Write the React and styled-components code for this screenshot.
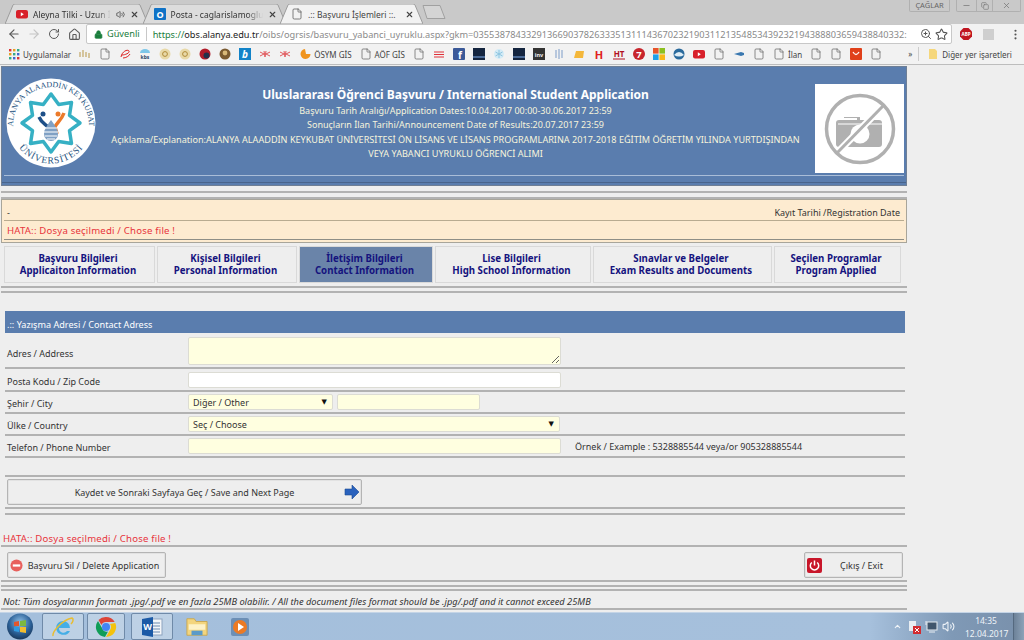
import React from "react";
import styled, { createGlobalStyle } from "styled-components";
import {
  ArrowLeft,
  ArrowRight,
  RotateCw,
  Home,
  Lock,
  ZoomIn,
  Star,
  File,
  MoreVertical,
  Volume2,
  X,
  Minus,
  Copy,
  ChevronUp,
} from "lucide-react";

const FONT = `"Noto Sans", "DejaVu Sans", sans-serif`;

const GlobalStyle = createGlobalStyle`
  html, body {
    margin: 0;
    padding: 0;
    background: #eeeeee;
  }
  * {
    box-sizing: border-box;
  }
`;

const Screen = styled.div`
  width: 1024px;
  height: 640px;
  display: flex;
  flex-direction: column;
  overflow: hidden;
  font-family: ${FONT};
  background: #eeeeee;
`;

/* browser chrome */
const TabStrip = styled.div`
  height: 24px;
  flex: none;
  background: #c9c9c9;
  display: flex;
  align-items: flex-end;
  padding-left: 5px;
  position: relative;
`;

const Tab = styled.div`
  position: relative;
  width: 143px;
  height: 20px;
  margin-right: -5.5px;
  padding: 0 9px 0 11px;
  display: flex;
  align-items: center;
  gap: 5px;
  font-size: 8.5px;
  color: ${(p) => (p.$active ? "#444" : "#333")};
  z-index: ${(p) => (p.$active ? 2 : 1)};
`;

const TabShape = styled.svg`
  position: absolute;
  inset: 0;
  width: 100%;
  height: 100%;
  z-index: -1;
`;

const TabTitle = styled.span`
  flex: 1;
  white-space: nowrap;
  overflow: hidden;
  mask-image: ${(p) => (p.$fade ? "linear-gradient(90deg, #000 82%, transparent)" : "none")};
`;

const NewTab = styled.svg`
  width: 24px;
  height: 14px;
  margin: 0 0 5px 4px;
`;

const WindowControls = styled.div`
  margin-left: auto;
  align-self: flex-start;
  display: flex;
  gap: 6px;
  padding-right: 3px;
`;

const UserBadge = styled.div`
  width: 41px;
  height: 12px;
  border: 1px solid #b0b0b0;
  border-top: 0;
  border-radius: 0 0 2px 2px;
  font-size: 7.5px;
  line-height: 11px;
  text-align: center;
  color: #666;
`;

const WinButtons = styled.div`
  width: 65px;
  height: 12px;
  border: 1px solid #b0b0b0;
  border-top: 0;
  border-radius: 0 0 2px 2px;
  display: grid;
  grid-template-columns: 20px 16px 1fr;
  color: #777;
`;

const WinButton = styled.div`
  display: flex;
  align-items: center;
  justify-content: center;
  border-right: ${(p) => (p.$last ? "0" : "1px solid #b0b0b0")};
`;

const Toolbar = styled.div`
  height: 20px;
  flex: none;
  background: #f2f2f2;
  display: flex;
  align-items: center;
  color: #555;
`;

const NavButton = styled.div`
  width: 20px;
  height: 20px;
  flex: none;
  display: flex;
  align-items: center;
  justify-content: center;
  color: ${(p) => (p.$off ? "#c4c4c4" : "#5a5a5a")};
`;

const NavGroup = styled.div`
  display: flex;
  padding-left: 4px;
  width: 86px;
  flex: none;
`;

const Omnibox = styled.div`
  width: 866px;
  height: 20px;
  flex: none;
  background: #fff;
  border: 1px solid #c8c8c8;
  border-radius: 2px;
  display: flex;
  align-items: center;
  padding: 0 3px 0 7px;
  font-size: 9.2px;
  color: #1a7d3c;
`;

const Secure = styled.span`
  margin-left: 4px;
  padding-right: 6px;
  border-right: 1px solid #c8c8c8;
  line-height: 14px;
`;

const Url = styled.div`
  flex: 1;
  min-width: 0;
  margin: 0 6px 0 6px;
  white-space: nowrap;
  overflow: hidden;
  color: #8a8a8a;
`;

const UrlScheme = styled.span`
  color: #1a7d3c;
`;

const UrlHost = styled.span`
  color: #222;
`;

const OmniIcons = styled.div`
  display: flex;
  gap: 3px;
  color: #555;
`;

const Extensions = styled.div`
  flex: 1;
  display: flex;
  align-items: center;
  padding-left: 8px;
  gap: 11px;
`;

const GrayExt = styled.div`
  width: 11px;
  height: 11px;
  flex: none;
  background: #cfcfcf;
`;

const MenuDots = styled.div`
  margin-left: 4px;
  display: flex;
`;

const Bookmarks = styled.div`
  height: 21px;
  flex: none;
  background: #f2f2f2;
  border-bottom: 1px solid #bdbdbd;
  display: flex;
  align-items: center;
  padding-left: 8px;
  gap: 8px;
  font-size: 8px;
  color: #444;
  white-space: nowrap;
`;

const Mark = styled.div`
  display: flex;
  align-items: center;
  gap: 3px;
`;

const More = styled.span`
  margin-left: 18px;
  padding-right: 6px;
  border-right: 1px solid #ccc;
  line-height: 14px;
`;

const Favicon = styled.svg`
  width: 12px;
  height: 12px;
  flex: none;
  display: block;
`;

const PageIcon = () => <File size={12} color="#666" strokeWidth={1.5} />;

const favicons = {
  apps: (
    <>
      {[1, 5, 9].map((y, i) =>
        [1, 5, 9].map((x, j) => (
          <rect
            key={`${i}${j}`}
            x={x}
            y={y}
            width="2.4"
            height="2.4"
            fill={["#d33", "#e8a020", "#3a8", "#46c"][(i + j) % 4]}
          />
        ))
      )}
    </>
  ),
  hecs: <path d="M1 4v5M4 2v7M7 4v5M10 5v5" stroke="#c9b27a" strokeWidth="1.4" />,
  ered: <path d="M2 9C3 3 9 1 10 3S6 7 3 7M4 10c3 0 6-2 7-4" stroke="#d22" fill="none" />,
  kbs: (
    <>
      <path d="M1 5a5 4 0 0 1 10 0z" fill="#7cc6e8" />
      <text x="6" y="10.5" fontSize="5" fontWeight="700" fill="#246" textAnchor="middle">kbs</text>
    </>
  ),
  seal: (
    <>
      <circle cx="6" cy="6" r="5.5" fill="#e8d9a8" />
      <circle cx="6" cy="6" r="2.4" fill="none" stroke="#b08a35" />
    </>
  ),
  ball: (
    <>
      <circle cx="6" cy="6" r="5.5" fill="#b01c2a" />
      <circle cx="7.5" cy="7.5" r="3" fill="#23304a" />
    </>
  ),
  brown: (
    <>
      <circle cx="6" cy="6" r="5.5" fill="#7a5a30" />
      <circle cx="6" cy="5" r="2.4" fill="#d8b878" />
    </>
  ),
  b: (
    <>
      <rect width="12" height="12" fill="#1283c8" />
      <text x="6" y="10" fontSize="10" fontWeight="700" fontStyle="italic" fill="#fff" textAnchor="middle">b</text>
    </>
  ),
  osym: <path d="M1 4l4 2-4 2M11 4L7 6l4 2M5 3l1 6 1-6" stroke="#e2585c" fill="none" />,
  orange: <path d="M6 1a5 5 0 1 0 5.5 5H7L6 1z" fill="#f0941e" />,
  stripes: <path d="M1 4h10M1 6.5h10M1 9h10" stroke="#e03038" strokeWidth="1.2" />,
  f: (
    <>
      <rect width="12" height="12" rx="1" fill="#3b5998" />
      <text x="7" y="10.5" fontSize="10" fontWeight="700" fill="#fff" textAnchor="middle">f</text>
    </>
  ),
  dark: (
    <>
      <rect width="12" height="12" fill="#14253f" />
      <rect y="8" width="12" height="2" fill="#4a6a96" />
    </>
  ),
  snow: (
    <>
      <circle cx="6" cy="6" r="5" fill="#d4ebf6" />
      <path d="M6 2v8M2.5 4l7 4M9.5 4l-7 4" stroke="#8cc4e0" />
    </>
  ),
  inv: (
    <>
      <rect width="12" height="12" fill="#333" />
      <text x="6" y="8.5" fontSize="5.5" fontWeight="700" fill="#eee" textAnchor="middle">inv</text>
    </>
  ),
  pale: <path d="M3 2v8M6 1v10M9 2v8" stroke="#a8bcd8" strokeWidth="1.6" />,
  folderOrange: <path d="M1 10l2-7h8l-1 7z" fill="#f4b73a" />,
  h: <text x="6" y="10.5" fontSize="11" fontWeight="700" fill="#e02020" textAnchor="middle">H</text>,
  ht: (
    <>
      <text x="6" y="9" fontSize="8" fontWeight="700" fill="#b01020" textAnchor="middle">HT</text>
      <path d="M0 11h12" stroke="#b01020" />
    </>
  ),
  seven: (
    <>
      <circle cx="6" cy="6" r="6" fill="#c8252c" />
      <text x="6" y="9.5" fontSize="9.5" fontWeight="700" fill="#fff" textAnchor="middle">7</text>
    </>
  ),
  grid: (
    <>
      <rect width="5.6" height="5.6" fill="#e8542a" />
      <rect x="6.4" width="5.6" height="5.6" fill="#8cc020" />
      <rect y="6.4" width="5.6" height="5.6" fill="#1ea0e8" />
      <rect x="6.4" y="6.4" width="5.6" height="5.6" fill="#f8b818" />
    </>
  ),
  globe: (
    <>
      <circle cx="6" cy="6" r="5.5" fill="#2a6a9c" />
      <path d="M1 7q5-6 10 0q-5 3-10 0z" fill="#e0eef6" />
    </>
  ),
  yt: (
    <>
      <rect y="2" width="12" height="8.5" rx="2" fill="#d8202a" />
      <path d="M4.8 4.2l3 2-3 2z" fill="#fff" />
    </>
  ),
  fish: <path d="M1 6l7-2 3 1v2l-3 1z" fill="#3a78b0" />,
  basket: (
    <>
      <rect width="12" height="12" rx="1" fill="#e0401a" />
      <path d="M3 4q3 5 6 0" stroke="#fff" fill="none" strokeWidth="1.3" />
    </>
  ),
};

const bookmarkItems = [
  { icon: "apps", label: "Uygulamalar" },
  { icon: "hecs" },
  { icon: "page" },
  { icon: "ered" },
  { icon: "kbs" },
  { icon: "seal" },
  { icon: "seal" },
  { icon: "ball" },
  { icon: "brown" },
  { icon: "b" },
  { icon: "osym" },
  { icon: "osym" },
  { icon: "orange", label: "ÖSYM GİS" },
  { icon: "page", label: "AÖF GİS" },
  { icon: "page" },
  { icon: "stripes" },
  { icon: "f" },
  { icon: "dark" },
  { icon: "snow" },
  { icon: "dark" },
  { icon: "inv" },
  { icon: "pale" },
  { icon: "folderOrange" },
  { icon: "h" },
  { icon: "ht" },
  { icon: "seven" },
  { icon: "grid" },
  { icon: "globe" },
  { icon: "yt" },
  { icon: "page" },
  { icon: "fish" },
  { icon: "page" },
  { icon: "page", label: "İlan" },
  { icon: "page" },
  { icon: "page" },
  { icon: "basket" },
  { icon: "page" },
];

const tabShape = (fill, stroke) => (
  <TabShape viewBox="0 0 143 20" preserveAspectRatio="none">
    <path d="M0 20 L8 1 Q8.5 0 10 0 H133 Q134.5 0 135 1 L143 20 Z" fill={fill} stroke={stroke} />
  </TabShape>
);

/* page header */
const Main = styled.main`
  flex: 1;
  min-height: 0;
  width: 907px;
  padding-top: 1px;
  font-size: 9px;
  color: #333;
`;

const Header = styled.header`
  height: 120px;
  margin-left: 1px;
  background: #5a7dae;
  border: 1px solid #6f7f95;
  display: flex;
  flex-direction: column;
`;

const HeaderBody = styled.div`
  flex: 1;
  display: flex;
  align-items: flex-start;
  padding: 10px 2px 0 4px;
`;

const HeaderText = styled.div`
  flex: 1;
  padding-top: 10px;
  text-align: center;
  color: #f6f4dc;
  font-size: 9px;
  line-height: 14.4px;
`;

const HeaderTitle = styled.div`
  color: #fff;
  font-size: 12px;
  font-weight: 700;
  line-height: 16px;
  margin-bottom: 1px;
`;

const Explanation = styled.div`
  font-size: 9.1px;
`;

const Photo = styled.div`
  width: 89px;
  height: 89px;
  margin-top: 7px;
  background: #fff;
  display: flex;
  align-items: center;
  justify-content: center;
`;

const HeaderLine = styled.div`
  height: 1px;
  margin: 0 2px 6px;
  background: #a9bdd8;
`;

const HeaderFoot = styled.div`
  height: 1px;
  margin-bottom: 2px;
  background: #48648c;
`;

const Rule = styled.div`
  height: 2px;
  margin-top: ${(p) => p.$top || 0}px;
  margin-left: ${(p) => (p.$inset ? 5 : 1)}px;
  margin-right: ${(p) => (p.$inset ? 2 : 0)}px;
  background: #b2b2b2;
`;

/* notice */
const Notice = styled.div`
  height: 44px;
  margin-left: 1px;
  background: #fdebd0;
  border: 1px solid #a8a59a;
  padding: 0 2px;
`;

const NoticeTop = styled.div`
  height: 21px;
  display: flex;
  justify-content: space-between;
  align-items: flex-end;
  padding: 0 4px 1px 3px;
  border-bottom: 1px solid #b8ab90;
`;

const NoticeBottom = styled.div`
  height: 19px;
  display: flex;
  align-items: center;
  padding: 1px 0 0 3px;
  border-bottom: 1px solid #8e8e86;
`;

const ErrorText = styled.span`
  color: #e8343c;
  font-size: 9.6px;
  letter-spacing: 0.19px;
`;

/* tabs */
const TabBar = styled.nav`
  height: 37px;
  margin: 3px 0 0 4px;
  display: flex;
  gap: 2px;
`;

const StepTab = styled.div`
  width: ${(p) => p.$w}px;
  flex: none;
  display: flex;
  flex-direction: column;
  justify-content: center;
  align-items: center;
  padding-right: 3px;
  background: ${(p) => (p.$active ? "#6a84a9" : "#eeeeee")};
  border: 1px solid #d9d9d9;
  color: #15137e;
  font-size: 9.7px;
  font-weight: 700;
  line-height: 12px;
  white-space: nowrap;
`;

/* form */
const SectionBar = styled.div`
  height: 22px;
  margin: 18px 0 0 5px;
  width: 900px;
  background: #5a7dae;
  color: #fff;
  font-size: 9.1px;
  line-height: 27px;
  padding-left: 2px;
`;

const Form = styled.form`
  margin-left: 5px;
  width: 900px;
`;

const Row = styled.div`
  display: flex;
  align-items: center;
  height: ${(p) => p.$h}px;
  padding-top: ${(p) => p.$pt || 0}px;
  border-bottom: 2px solid #b2b2b2;
`;

const Label = styled.label`
  width: 183px;
  flex: none;
  padding: ${(p) => p.$pad ?? 3}px 0 0 2px;
`;

const fieldStyle = `
  height: 16px;
  border: 1px solid #dcdcd4;
  border-radius: 2px;
  padding: 0 4px;
  font-family: ${FONT};
  font-size: 9px;
  color: #333;
  outline: none;
  display: block;
`;

const TextField = styled.input`
  ${fieldStyle}
  width: ${(p) => p.$w}px;
  margin-left: ${(p) => p.$ml || 0}px;
  background: ${(p) => (p.$plain ? "#fff" : "#ffffe0")};
`;

const TextArea = styled.textarea`
  ${fieldStyle}
  width: 373px;
  height: 28px;
  margin: 0;
  background: #ffffe0;
`;

const SelectWrap = styled.div`
  position: relative;
  width: ${(p) => p.$w}px;
`;

const Select = styled.select`
  ${fieldStyle}
  appearance: none;
  width: 100%;
  background: #ffffe0;
`;

const SelectArrow = styled.span`
  position: absolute;
  top: 3px;
  right: 6px;
  font-size: 7px;
  line-height: 10px;
  color: #111;
  pointer-events: none;
`;

const Hint = styled.span`
  margin-left: 14px;
  white-space: nowrap;
`;

const ButtonRow = styled.div`
  display: flex;
  justify-content: space-between;
  margin-left: 7px;
  width: 896px;
  margin-top: ${(p) => p.$top || 0}px;
`;

const Button = styled.button`
  width: ${(p) => p.$w}px;
  height: 26px;
  padding: 0 1px 0 2px;
  background: #eeeeee;
  border: 1px solid #b4b4b4;
  border-radius: 2px;
  box-shadow: 0 0 0 1px #e2e2e2 inset;
  font-family: ${FONT};
  font-size: 9px;
  color: #333;
  display: flex;
  align-items: center;
`;

const ButtonCaption = styled.span`
  flex: 1;
  padding-left: ${(p) => p.$shift || 0}px;
  text-align: center;
  white-space: nowrap;
`;

const ErrorLine = styled.div`
  height: 30px;
  margin-left: 3px;
  display: flex;
  align-items: flex-end;
`;

const Note = styled.div`
  height: 17px;
  margin-left: 3px;
  display: flex;
  align-items: center;
  padding-top: 4px;
  font-size: 9.3px;
  font-style: italic;
  white-space: nowrap;
`;

/* windows taskbar */
const Taskbar = styled.footer`
  height: 28px;
  flex: none;
  background: linear-gradient(90deg, #a4bfdc 0%, #a6c0dc 85%, #7f99b6 93%, #7990ab 100%);
  border-top: 1px solid #c4d4e6;
  display: flex;
  align-items: stretch;
  padding-left: 5px;
`;

const StartOrb = styled.svg`
  width: 28px;
  height: 27px;
  margin-right: 9px;
`;

const TaskButton = styled.div`
  width: ${(p) => p.$w || 42}px;
  margin-right: ${(p) => p.$gap ?? 3}px;
  display: flex;
  align-items: center;
  justify-content: center;
  background: ${(p) => (p.$open ? "rgba(255, 255, 255, 0.28)" : "transparent")};
  border: ${(p) => (p.$open ? "1px solid #6f8aa8" : "0")};
  border-radius: 2px;
`;

const Tray = styled.div`
  margin-left: auto;
  display: flex;
  align-items: stretch;
  color: #eef3f8;
`;

const TrayIcon = styled.div`
  width: 17px;
  display: flex;
  align-items: center;
  justify-content: center;
`;

const Clock = styled.div`
  width: 42px;
  margin-left: 8px;
  display: flex;
  flex-direction: column;
  justify-content: center;
  font-size: 8.5px;
  line-height: 13px;
  text-align: center;
`;

const ShowDesktop = styled.div`
  width: 11px;
  margin-left: 6px;
  background: linear-gradient(90deg, #6d8299, #8da2b8);
  border-left: 1px solid #55697f;
`;

const starPoints = Array.from({ length: 16 }, (_, i) => {
  const r = i % 2 === 0 ? 29 : 20;
  const a = (Math.PI * i) / 8 - Math.PI / 2;
  return `${(45 + r * Math.cos(a)).toFixed(1)},${(46 + r * Math.sin(a)).toFixed(1)}`;
}).join(" ");

const UniversityLogo = () => (
  <svg width="90" height="92" viewBox="0 0 90 92">
    <defs>
      <path id="logoTop" d="M10 63a38 38 0 1 1 70 0" />
      <path id="logoBottom" d="M7 60a40.5 40.5 0 0 0 76 0" />
    </defs>
    <circle cx="45" cy="46" r="44.5" fill="#fff" />
    <text fontSize="8" fontFamily="Liberation Serif, serif" fill="#23517e">
      <textPath href="#logoTop" startOffset="50%" textAnchor="middle">
        ALANYA ALAADDİN KEYKUBAT
      </textPath>
    </text>
    <text fontSize="9.5" fontFamily="Liberation Serif, serif" fill="#23517e" letterSpacing="0.8">
      <textPath href="#logoBottom" startOffset="50%" textAnchor="middle">
        ÜNİVERSİTESİ
      </textPath>
    </text>
    <polygon points={starPoints} fill="#fff" stroke="#36b0c4" strokeWidth="3.5" strokeLinejoin="round" />
    <path d="M33 40c3 7 7 7 10 11" stroke="#1d4f88" strokeWidth="3.5" fill="none" />
    <circle cx="37" cy="37" r="2.5" fill="#1d4f88" />
    <path d="M58 36c-3 8-7 9-9 14l2 7" stroke="#ec7a2a" strokeWidth="3.5" fill="none" />
    <circle cx="52" cy="37" r="2.5" fill="#ec7a2a" />
    <path d="M45 43c-6 8-7 11-7 14a7 7 0 0 0 14 0c0-3-1-6-7-14z" fill="#7fa0c4" />
    <path d="M39 51h12M38 55h14M39 59h12M41 62h8" stroke="#fff" strokeWidth="1.1" />
  </svg>
);

const NoPhoto = () => (
  <svg width="72" height="72" viewBox="0 0 72 72">
    <path
      d="M15 27h5v-3h16v3h19q3 0 3 3v21q0 3-3 3H15q-3 0-3-3V30q0-3 3-3z"
      fill="#b0b0b0"
    />
    <rect x="19" y="25" width="14" height="2" fill="#fff" />
    <path d="M14 31h44" stroke="#fff" strokeWidth="1" />
    <circle cx="36" cy="41" r="9.5" fill="#fff" />
    <path d="M16 57L58 14" stroke="#fff" strokeWidth="7" />
    <circle cx="36" cy="36" r="33.5" fill="none" stroke="#b0b0b0" strokeWidth="3.5" />
    <path d="M13 60L59 13" stroke="#b0b0b0" strokeWidth="3" />
  </svg>
);

const NextArrow = () => (
  <svg width="16" height="16" viewBox="0 0 16 16">
    <path d="M1 5h7V1l7 7-7 7v-4H1z" fill="#2a62bd" stroke="#1a4a96" strokeWidth="0.6" />
  </svg>
);

const DeleteIcon = () => (
  <svg width="13" height="13" viewBox="0 0 14 14">
    <circle cx="7" cy="7" r="6.5" fill="#e8605c" />
    <rect x="3" y="5.8" width="8" height="2.4" fill="#fff" />
  </svg>
);

const ExitIcon = () => (
  <svg width="15" height="15" viewBox="0 0 15 15">
    <rect width="15" height="15" rx="2" fill="#c8162a" />
    <path d="M4.8 4.5a4.2 4.2 0 1 0 5.4 0" stroke="#fff" strokeWidth="1.5" fill="none" />
    <path d="M7.5 2.5v5" stroke="#fff" strokeWidth="1.5" />
  </svg>
);

const AdBlockIcon = () => (
  <svg width="12" height="12" viewBox="0 0 12 12">
    <path d="M3.5 0h5L12 3.5v5L8.500 12h-5L0 8.500v-5z" fill="#c01520" />
    <text x="6" y="7.8" fontSize="4.6" fontWeight="700" fill="#fff" textAnchor="middle">ABP</text>
  </svg>
);

const App = () => {
  return (
    <Screen>
      <GlobalStyle />
      <TabStrip>
        <Tab>
          {tabShape("#dcdcdc", "#9c9c9c")}
          <Favicon viewBox="0 0 12 12">{favicons.yt}</Favicon>
          <TabTitle $fade>Aleyna Tilki - Uzun İnce</TabTitle>
          <Volume2 size={9} color="#444" />
          <X size={9} color="#444" strokeWidth={3} />
        </Tab>
        <Tab>
          {tabShape("#dcdcdc", "#9c9c9c")}
          <Favicon viewBox="0 0 12 12">
            <rect width="12" height="12" rx="1" fill="#0f72c6" />
            <text x="6" y="9.5" fontSize="9" fontWeight="700" fill="#fff" textAnchor="middle">O</text>
          </Favicon>
          <TabTitle $fade>Posta - caglarislamoglu_</TabTitle>
          <X size={9} color="#444" strokeWidth={3} />
        </Tab>
        <Tab $active>
          {tabShape("#f2f2f2", "#9c9c9c")}
          <File size={12} color="#555" strokeWidth={1.5} />
          <TabTitle>.:: Başvuru İşlemleri ::.</TabTitle>
          <X size={9} color="#444" strokeWidth={3} />
        </Tab>
        <NewTab viewBox="0 0 24 14">
          <path d="M1 .5h17l5 13H5z" fill="#d4d4d4" stroke="#a0a0a0" />
        </NewTab>
        <WindowControls>
          <UserBadge>ÇAĞLAR</UserBadge>
          <WinButtons>
            <WinButton><Minus size={9} /></WinButton>
            <WinButton><Copy size={8} /></WinButton>
            <WinButton $last><X size={9} /></WinButton>
          </WinButtons>
        </WindowControls>
      </TabStrip>

      <Toolbar>
        <NavGroup>
          <NavButton><ArrowLeft size={14} /></NavButton>
          <NavButton $off><ArrowRight size={14} /></NavButton>
          <NavButton><RotateCw size={12} /></NavButton>
          <NavButton><Home size={13} /></NavButton>
        </NavGroup>
        <Omnibox>
          <Lock size={9} color="#1a7d3c" fill="#1a7d3c" />
          <Secure>Güvenli</Secure>
          <Url>
            <UrlScheme>https://</UrlScheme>
            <UrlHost>obs.alanya.edu.tr</UrlHost>
            /oibs/ogrsis/basvuru_yabanci_uyruklu.aspx?gkm=0355387843329136690378263335131114367023219031121354853439232194388803659438840332:
          </Url>
          <OmniIcons>
            <ZoomIn size={12} />
            <Star size={13} />
          </OmniIcons>
        </Omnibox>
        <Extensions>
          <AdBlockIcon />
          <GrayExt />
          <MenuDots><MoreVertical size={13} /></MenuDots>
        </Extensions>
      </Toolbar>

      <Bookmarks>
        {bookmarkItems.map((item, i) => (
          <Mark key={i}>
            {item.icon === "page" ? (
              <PageIcon />
            ) : (
              <Favicon viewBox="0 0 12 12">{favicons[item.icon]}</Favicon>
            )}
            {item.label && <span>{item.label}</span>}
          </Mark>
        ))}
        <More>»</More>
        <Mark>
          <Favicon viewBox="0 0 12 12">
            <path d="M2 1h6l2 2v8H2z" fill="#f5d77c" />
          </Favicon>
          <span>Diğer yer işaretleri</span>
        </Mark>
      </Bookmarks>

      <Main>
        <Header>
          <HeaderBody>
            <UniversityLogo />
            <HeaderText>
              <HeaderTitle>Uluslararası Öğrenci Başvuru / International Student Application</HeaderTitle>
              <div>Başvuru Tarih Aralığı/Application Dates:10.04.2017 00:00-30.06.2017 23:59</div>
              <div>Sonuçların İlan Tarihi/Announcement Date of Results:20.07.2017 23:59</div>
              <Explanation>
                Açıklama/Explanation:ALANYA ALAADDİN KEYKUBAT ÜNİVERSİTESİ ÖN LİSANS VE LİSANS PROGRAMLARINA 2017-2018 EĞİTİM ÖĞRETİM YILINDA YURTDIŞINDAN
                <br />
                VEYA YABANCI UYRUKLU ÖĞRENCİ ALIMI
              </Explanation>
            </HeaderText>
            <Photo>
              <NoPhoto />
            </Photo>
          </HeaderBody>
          <HeaderLine />
          <HeaderFoot />
        </Header>

        <Rule $top={5} />
        <Rule $top={4} />

        <Notice>
          <NoticeTop>
            <span>-</span>
            <span>Kayıt Tarihi /Registration Date</span>
          </NoticeTop>
          <NoticeBottom>
            <ErrorText>HATA:: Dosya seçilmedi / Chose file !</ErrorText>
          </NoticeBottom>
        </Notice>

        <TabBar>
          <StepTab $w={151}><span>Başvuru Bilgileri</span><span>Applicaiton Information</span></StepTab>
          <StepTab $w={140}><span>Kişisel Bilgileri</span><span>Personal Information</span></StepTab>
          <StepTab $w={134} $active><span>İletişim Bilgileri</span><span>Contact Information</span></StepTab>
          <StepTab $w={156}><span>Lise Bilgileri</span><span>High School Information</span></StepTab>
          <StepTab $w={179}><span>Sınavlar ve Belgeler</span><span>Exam Results and Documents</span></StepTab>
          <StepTab $w={127}><span>Seçilen Programlar</span><span>Program Applied</span></StepTab>
        </TabBar>

        <Rule $top={3} />
        <Rule $top={3} />

        <SectionBar>.:: Yazışma Adresi / Contact Adress</SectionBar>

        <Form>
          <Row $h={36} $pt={1}>
            <Label $pad={5}>Adres / Address</Label>
            <TextArea />
          </Row>
          <Row $h={23} $pt={1}>
            <Label>Posta Kodu / Zip Code</Label>
            <TextField $w={373} $plain />
          </Row>
          <Row $h={22}>
            <Label>Şehir / City</Label>
            <SelectWrap $w={145}>
              <Select defaultValue="other">
                <option value="other">Diğer / Other</option>
              </Select>
              <SelectArrow>▼</SelectArrow>
            </SelectWrap>
            <TextField $w={143} $ml={4} />
          </Row>
          <Row $h={22}>
            <Label>Ülke / Country</Label>
            <SelectWrap $w={372}>
              <Select defaultValue="choose">
                <option value="choose">Seç / Choose</option>
              </Select>
              <SelectArrow>▼</SelectArrow>
            </SelectWrap>
          </Row>
          <Row $h={22}>
            <Label>Telefon / Phone Number</Label>
            <TextField $w={373} />
            <Hint>Örnek / Example : 5328885544 veya/or 905328885544</Hint>
          </Row>
          <Row $h={19} />
        </Form>

        <ButtonRow $top={2}>
          <Button type="button" $w={355}>
            <ButtonCaption $shift={15}>Kaydet ve Sonraki Sayfaya Geç / Save and Next Page</ButtonCaption>
            <NextArrow />
          </Button>
        </ButtonRow>
        <Rule $top={2} $inset />
        <Rule $top={4} $inset />

        <ErrorLine>
          <ErrorText>HATA:: Dosya seçilmedi / Chose file !</ErrorText>
        </ErrorLine>
        <Rule />

        <ButtonRow $top={5}>
          <Button type="button" $w={159}>
            <DeleteIcon />
            <ButtonCaption>Başvuru Sil / Delete Application</ButtonCaption>
          </Button>
          <Button type="button" $w={99}>
            <ExitIcon />
            <ButtonCaption>Çıkış / Exit</ButtonCaption>
          </Button>
        </ButtonRow>
        <Rule $top={2} />
        <Rule $top={3} />
        <Rule $top={2} />
        <Note>
          Not: Tüm dosyalarının formatı .jpg/.pdf ve en fazla 25MB olabilir. / All the document files format should be .jpg/.pdf and it cannot exceed 25MB
        </Note>
        <Rule />
      </Main>

      <Taskbar>
        <StartOrb viewBox="0 0 28 27">
          <defs>
            <radialGradient id="orb" cx="50%" cy="35%" r="70%">
              <stop offset="0%" stopColor="#8fc0e8" />
              <stop offset="60%" stopColor="#2a5f96" />
              <stop offset="100%" stopColor="#16304f" />
            </radialGradient>
          </defs>
          <circle cx="15" cy="13.5" r="13" fill="url(#orb)" />
          <path d="M9 9l5-1v5H9z" fill="#e2562c" />
          <path d="M15 8l6-1v6h-6z" fill="#7db840" />
          <path d="M9 14h5v5l-5-1z" fill="#2f9ae0" />
          <path d="M15 14h6v6l-6-1z" fill="#f3bd2e" />
        </StartOrb>
        <TaskButton $open>
          <svg width="24" height="24" viewBox="0 0 24 24">
            <path d="M5 13a7 7 0 0 1 14 0H8a4.5 4.5 0 0 0 8 3h3a7.5 7.5 0 0 1-14-3z" fill="#45aee6" />
            <path d="M2 21C1 17 11 5 21 3c2 1 1 4-1 6" stroke="#e8bd32" strokeWidth="1.5" fill="none" />
          </svg>
        </TaskButton>
        <TaskButton $open $w={38} $gap={6}>
          <svg width="22" height="22" viewBox="0 0 22 22">
            <path d="M11 1a10 10 0 0 1 8.7 5H11a5 5 0 0 0-4.6 3L3.5 4A10 10 0 0 1 11 1z" fill="#dc4437" />
            <path d="M20.3 7A10 10 0 0 1 11 21l4.3-7.5A5 5 0 0 0 15 8z" fill="#f4c20d" />
            <path d="M3 5l4.3 7.5A5 5 0 0 0 13 15.5L10 21A10 10 0 0 1 3 5z" fill="#0f9d58" />
            <circle cx="11" cy="11" r="4" fill="#4285f4" />
          </svg>
        </TaskButton>
        <TaskButton $open $gap={13}>
          <svg width="22" height="22" viewBox="0 0 22 22">
            <rect x="9" y="3" width="12" height="16" fill="#f4f6f9" stroke="#8ea4bf" />
            <path d="M12 7h7M12 10h7M12 13h7M12 16h7" stroke="#6a8ab0" />
            <path d="M1 3l11-2v20L1 19z" fill="#1c5aa6" />
            <text x="6.5" y="14" fontSize="9" fontWeight="700" fill="#fff" textAnchor="middle">W</text>
          </svg>
        </TaskButton>
        <TaskButton $w={22} $gap={21}>
          <svg width="24" height="22" viewBox="0 0 24 22">
            <path d="M1 2h8l2 3h12v15H1z" fill="#f3d57e" stroke="#c8a650" />
            <rect x="3" y="8" width="18" height="6" fill="#fdf2c8" />
            <rect x="6" y="15" width="12" height="5" fill="#5a9ac8" />
          </svg>
        </TaskButton>
        <TaskButton $w={22}>
          <svg width="22" height="22" viewBox="0 0 22 22">
            <rect x="2" y="2" width="18" height="18" rx="2" fill="#6d8fb5" />
            <circle cx="11" cy="11" r="7" fill="#ec7a24" />
            <path d="M9 7l6 4-6 4z" fill="#fff" />
          </svg>
        </TaskButton>
        <Tray>
          <TrayIcon><ChevronUp size={9} strokeWidth={3} /></TrayIcon>
          <TrayIcon>
            <svg width="13" height="14" viewBox="0 0 13 14">
              <path d="M1 1h7v10H1z" fill="#e8edf2" />
              <rect x="5" y="6" width="8" height="8" fill="#d22b30" />
              <path d="M7 8l4 4M11 8l-4 4" stroke="#fff" />
            </svg>
          </TrayIcon>
          <TrayIcon>
            <svg width="13" height="13" viewBox="0 0 13 13">
              <rect x="2" y="2" width="10" height="8" fill="#41566c" stroke="#e8edf2" />
              <path d="M4 12h6M1 1v4" stroke="#e8edf2" />
            </svg>
          </TrayIcon>
          <TrayIcon><Volume2 size={13} /></TrayIcon>
          <Clock>
            <div>14:35</div>
            <div>12.04.2017</div>
          </Clock>
          <ShowDesktop />
        </Tray>
      </Taskbar>
    </Screen>
  );
};

export default App;
